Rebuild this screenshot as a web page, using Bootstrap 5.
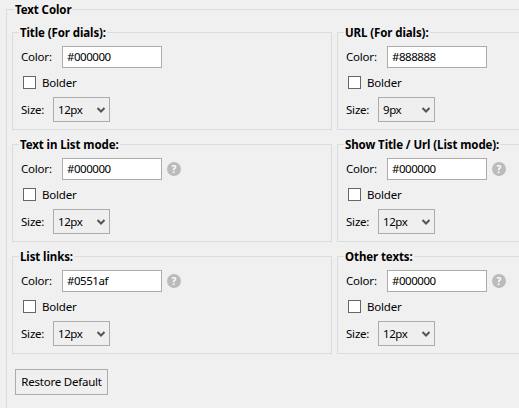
<!DOCTYPE html>
<html lang="en">
<head>
<meta charset="utf-8">
<title>Text Color</title>
<link href="https://cdn.jsdelivr.net/npm/bootstrap@5.3.0/dist/css/bootstrap.min.css" rel="stylesheet">
<script src="https://cdn.jsdelivr.net/npm/bootstrap@5.3.0/dist/js/bootstrap.bundle.min.js"></script>
<style>
html,body{height:408px;overflow:hidden;background:#f0f0f0;}
body{font:11.5px/16px "Noto Sans","Open Sans",sans-serif;color:#000;padding:0 0 0 6px;letter-spacing:-.2px;}
.outer-set{border:1px solid #dcdcdc;width:680px;height:440px;padding:0 5px;}
.outer-set>legend,.inner-set>legend{float:none;width:auto;font-size:11.5px;line-height:16px;font-weight:700;margin:0;letter-spacing:-.1px;}
.outer-set>legend{margin-left:2px;padding:2px 1px 0;}
.inner-set>legend{margin-left:-2px;padding:2px 1px 0;}
.dial-grid{display:grid;grid-template-columns:320px 320px;gap:5px;margin-top:5px;}
.inner-set{border:1px solid #dcdcdc;padding:5px 8px 7px;height:107px;}
.color-label{width:41px;}
.size-label{width:32px;}
.form-control.color-input{width:100px;height:22px;padding:0 4px 1px;font-size:11.5px;line-height:19px;border:1px solid #ababab;border-radius:0;box-shadow:none;color:#000;letter-spacing:-.45px;}
.help-dot{width:14px;height:14px;margin-left:5px;border-radius:50%;background:#bbb;color:#fff;font-size:10px;line-height:14px;font-weight:700;text-align:center;letter-spacing:0;}
.bold-check{margin:8px 0;height:13px;padding-left:2px;}
.form-check-input.bold-box{width:13px;height:13px;margin:0 6px 0 0;border:1px solid #666;border-radius:0;flex:none;}
.form-select.size-select{width:57px;height:25px;padding:0 0 0 4px;font-size:11.5px;line-height:23px;border:1px solid #ababab;border-radius:0;color:#000;letter-spacing:-.4px;
background-color:#efefef;background-position:right 3px center;background-size:10px 8px;
background-image:url("data:image/svg+xml,%3csvg xmlns='http://www.w3.org/2000/svg' viewBox='0 0 10 8'%3e%3cpath fill='none' stroke='%23555' stroke-width='2' d='M1.500 2l3.500 3.500L8.500 2'/%3e%3c/svg%3e");}
.btn.restore-btn{width:93px;height:26px;margin:15px 0 0 3px;padding:0;font-size:11.5px;line-height:24px;color:#000;background:#efefef;border:1px solid #ababab;border-radius:0;letter-spacing:-.22px;}
</style>
</head>
<body>
<fieldset class="outer-set">
<legend>Text Color</legend>
<div class="dial-grid">
<fieldset class="inner-set"><legend>Title (For dials):</legend>
<div class="d-flex align-items-center"><label class="color-label">Color:</label><input class="form-control color-input" value="#000000"></div>
<div class="d-flex align-items-center bold-check"><input type="checkbox" class="form-check-input bold-box"><label>Bolder</label></div>
<div class="d-flex align-items-center"><label class="size-label">Size:</label><select class="form-select size-select"><option>12px</option></select></div>
</fieldset>
<fieldset class="inner-set"><legend>URL (For dials):</legend>
<div class="d-flex align-items-center"><label class="color-label">Color:</label><input class="form-control color-input" value="#888888"></div>
<div class="d-flex align-items-center bold-check"><input type="checkbox" class="form-check-input bold-box"><label>Bolder</label></div>
<div class="d-flex align-items-center"><label class="size-label">Size:</label><select class="form-select size-select"><option>9px</option></select></div>
</fieldset>
<fieldset class="inner-set"><legend>Text in List mode:</legend>
<div class="d-flex align-items-center"><label class="color-label">Color:</label><input class="form-control color-input" value="#000000"><span class="help-dot">?</span></div>
<div class="d-flex align-items-center bold-check"><input type="checkbox" class="form-check-input bold-box"><label>Bolder</label></div>
<div class="d-flex align-items-center"><label class="size-label">Size:</label><select class="form-select size-select"><option>12px</option></select></div>
</fieldset>
<fieldset class="inner-set"><legend>Show Title / Url (List mode):</legend>
<div class="d-flex align-items-center"><label class="color-label">Color:</label><input class="form-control color-input" value="#000000"><span class="help-dot">?</span></div>
<div class="d-flex align-items-center bold-check"><input type="checkbox" class="form-check-input bold-box"><label>Bolder</label></div>
<div class="d-flex align-items-center"><label class="size-label">Size:</label><select class="form-select size-select"><option>12px</option></select></div>
</fieldset>
<fieldset class="inner-set"><legend>List links:</legend>
<div class="d-flex align-items-center"><label class="color-label">Color:</label><input class="form-control color-input" value="#0551af"><span class="help-dot">?</span></div>
<div class="d-flex align-items-center bold-check"><input type="checkbox" class="form-check-input bold-box"><label>Bolder</label></div>
<div class="d-flex align-items-center"><label class="size-label">Size:</label><select class="form-select size-select"><option>12px</option></select></div>
</fieldset>
<fieldset class="inner-set"><legend>Other texts:</legend>
<div class="d-flex align-items-center"><label class="color-label">Color:</label><input class="form-control color-input" value="#000000"><span class="help-dot">?</span></div>
<div class="d-flex align-items-center bold-check"><input type="checkbox" class="form-check-input bold-box"><label>Bolder</label></div>
<div class="d-flex align-items-center"><label class="size-label">Size:</label><select class="form-select size-select"><option>12px</option></select></div>
</fieldset>
</div>
<button type="button" class="btn restore-btn">Restore Default</button>
</fieldset>
</body>
</html>
